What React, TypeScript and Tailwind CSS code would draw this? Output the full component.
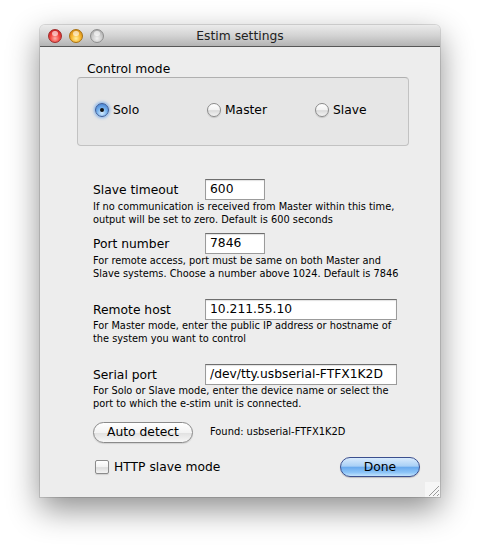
import React from 'react'

const font = "font-['DejaVu_Sans',sans-serif]"

function Light({ kind }: { kind: 'close' | 'min' | 'zoom' }) {
  const cls =
    kind === 'close'
      ? 'border-[#9e2a2a] bg-[radial-gradient(circle_at_50%_70%,#ffb0a8_0%,#f2463f_45%,#b9151a_100%)]'
      : kind === 'min'
        ? 'border-[#a8700f] bg-[radial-gradient(circle_at_50%_70%,#fff0a0_0%,#f7b52e_45%,#c27810_100%)]'
        : 'border-[#8e8e8e] bg-[radial-gradient(circle_at_50%_70%,#f2f2f2_0%,#c9c9c9_50%,#9c9c9c_100%)]'
  return (
    <div className={`relative h-[14px] w-[14px] rounded-full border ${cls}`}>
      <div className="absolute left-[3px] top-[1px] h-[5px] w-[6px] rounded-full bg-white/60" />
    </div>
  )
}

function Radio({ checked, label }: { checked?: boolean; label: string }) {
  return (
    <div className="flex items-center gap-[4px]">
      {checked ? (
        <div className="flex h-[14px] w-[14px] items-center justify-center rounded-full border border-[#3b5c99] bg-[radial-gradient(circle_at_50%_75%,#d6ecff_0%,#78b2ec_45%,#3a76cc_100%)] shadow-[0_0_3px_1px_#7fb0ea]">
          <div className="h-[4px] w-[4px] rounded-full bg-[#111]" />
        </div>
      ) : (
        <div className="h-[14px] w-[14px] rounded-full border border-[#8b8b8b] bg-[linear-gradient(#ffffff,#f2f2f2_50%,#dadada_55%,#f4f4f4)] shadow-[0_1px_1px_rgba(0,0,0,0.15)]" />
      )}
      <span className="text-[12.3px] leading-[16px] text-black">{label}</span>
    </div>
  )
}

function Field({ label, value, width }: { label: string; value: string; width: string }) {
  return (
    <div className="flex h-[21px] items-center">
      <span className="w-[112px] text-[12.3px] leading-[16px] text-black">{label}</span>
      <div
        className={`flex h-[21px] ${width} items-center overflow-hidden whitespace-nowrap border border-[#9b9b9b] border-t-[#6e6e6e] bg-white pl-[4px] text-[12.3px] text-black shadow-[inset_0_1px_1px_rgba(0,0,0,0.12)]`}
      >
        {value}
      </div>
    </div>
  )
}

function Help({ children, mt }: { children: React.ReactNode; mt: string }) {
  return <p className={`${mt} text-[9.8px] leading-[12.5px] text-black`}>{children}</p>
}

export default function App() {
  return (
    <div className={`h-[552px] w-[480px] bg-white pl-[40px] pt-[25px] ${font}`}>
      <div className="relative flex h-[472px] w-[400px] flex-col overflow-hidden rounded-t-[5px] bg-[#ededed] shadow-[0_12px_32px_rgba(0,0,0,0.45),0_0_0_1px_rgba(0,0,0,0.12)]">
        {/* Title bar */}
        <div className="relative flex h-[22px] shrink-0 items-center gap-[7px] border-b border-[#575757] bg-[linear-gradient(#ebebeb,#d3d3d3_50%,#b4b4b4)] pl-[8px]">
          <Light kind="close" />
          <Light kind="min" />
          <Light kind="zoom" />
          <span className="absolute inset-x-0 top-[3px] text-center text-[12.3px] leading-[16px] text-[#222]">
            Estim settings
          </span>
        </div>

        {/* Control mode group */}
        <div className="ml-[47px] mt-[14px] text-[12.3px] leading-[16px] text-black">Control mode</div>
        <div className="ml-[37px] h-[69px] w-[332px] rounded-[4px] border border-[#c2c2c2] border-t-[#b0b0b0] bg-[#e6e6e6] pl-[17px] pt-[24px]">
          <div className="flex items-center">
            <div className="w-[112px]">
              <Radio checked label="Solo" />
            </div>
            <div className="w-[108px]">
              <Radio label="Master" />
            </div>
            <Radio label="Slave" />
          </div>
        </div>

        {/* Fields */}
        <div className="ml-[53px] mt-[33px] flex flex-col">
          <Field label="Slave timeout" value="600" width="w-[60px]" />
          <Help mt="mt-[1px]">
            If no communication is received from Master within this time,
            <br />
            output will be set to zero. Default is 600 seconds
          </Help>

          <div className="mt-[7px]">
            <Field label="Port number" value="7846" width="w-[60px]" />
          </div>
          <Help mt="mt-[1px]">
            For remote access, port must be same on both Master and
            <br />
            Slave systems. Choose a number above 1024. Default is 7846
          </Help>

          <div className="mt-[19px]">
            <Field label="Remote host" value="10.211.55.10" width="w-[192px]" />
          </div>
          <Help mt="mt-0">
            For Master mode, enter the public IP address or hostname of
            <br />
            the system you want to control
          </Help>

          <div className="mt-[19px]">
            <Field label="Serial port" value="/dev/tty.usbserial-FTFX1K2D" width="w-[192px]" />
          </div>
          <Help mt="mt-0">
            For Solo or Slave mode, enter the device name or select the
            <br />
            port to which the e-stim unit is connected.
          </Help>

          <div className="mt-[12px] flex items-center gap-[17px]">
            <button className="flex h-[21px] w-[100px] items-center justify-center rounded-full border border-[#8a8a8a] bg-[linear-gradient(#ffffff,#f3f3f3_50%,#e2e2e2_55%,#f7f7f7)] text-[12.3px] text-black shadow-[0_1px_1px_rgba(0,0,0,0.12)]">
              Auto detect
            </button>
            <span className="text-[9.9px] text-black">Found: usbserial-FTFX1K2D</span>
          </div>
        </div>

        {/* Bottom row */}
        <div className="ml-[55px] mr-[20px] mt-[14px] flex h-[20px] items-center justify-between">
          <div className="flex items-center gap-[5px]">
            <div className="h-[14px] w-[14px] rounded-[2px] border border-[#8b8b8b] bg-[linear-gradient(#ffffff,#f2f2f2_50%,#dcdcdc_55%,#f4f4f4)] shadow-[0_1px_1px_rgba(0,0,0,0.12)]" />
            <span className="text-[12.3px] leading-[16px] text-black">HTTP slave mode</span>
          </div>
          <button className="flex h-[20px] w-[80px] items-center justify-center rounded-full border border-[#3c4f8e] bg-[linear-gradient(#d9ebfd,#a9d0f6_45%,#6aaaee_52%,#8cc4f7_80%,#c3e3fc)] text-[12.3px] text-black shadow-[0_1px_1px_rgba(0,0,0,0.2)]">
            Done
          </button>
        </div>

        {/* Resize grip */}
        <div className="absolute bottom-0 right-0 h-[15px] w-[15px] bg-[#f6f6f6]">
          <svg width="15" height="15" viewBox="0 0 15 15">
            <path d="M4 14 L14 4 M8 14 L14 8 M12 14 L14 12" stroke="#9a9a9a" strokeWidth="1" />
          </svg>
        </div>
      </div>
    </div>
  )
}
